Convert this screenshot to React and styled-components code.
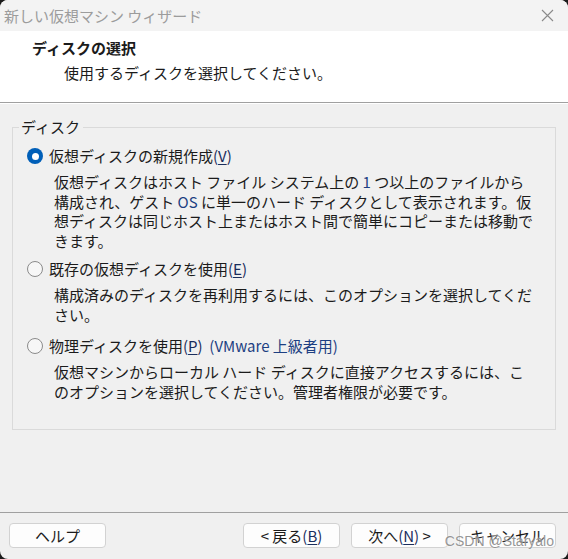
import React from 'react';
import styled, { createGlobalStyle } from 'styled-components';

const Global = createGlobalStyle`
  html, body { margin:0; padding:0; background:#1c1c1c; }
  body { font-family:"Noto Sans CJK JP", "Noto Sans", sans-serif; }
`

const Window = styled.div`
  position:relative;
  width:568px; height:559px;
  display:flex; flex-direction:column;
  background:#f0f0f0;
  border-radius:8px;
  overflow:hidden;
  color:#1b1b1b;
  font-size:15px;
`

const TitleBar = styled.div`
  height:31px; flex:none;
  display:flex; align-items:center; justify-content:space-between;
  padding:0 14px 0 4px;
  background:#f3f3f3;
  color:#9c9c9c;
  line-height:20px;
`

const Header = styled.div`
  height:72px; flex:none;
  background:#fff;
  border-bottom:1px solid #a0a0a0;
  box-shadow:0 1px 0 #fff;
  padding-top:7px;
  box-sizing:border-box;
`

const HeadTitle = styled.div`
  padding-left:32px;
  line-height:20px;
  font-weight:700;
`

const HeadSub = styled.div`
  padding-left:64px;
  margin-top:5px;
  line-height:20px;
`

const Body = styled.div`
  flex:1;
  padding:15px 12px 0 12px;
`

const Group = styled.fieldset`
  margin:0;
  height:312px;
  box-sizing:border-box;
  border:1px solid #dadada;
  padding:10px 0 0 0;
`

const Legend = styled.legend`
  margin-left:6px;
  padding:0 3px 0 2px;
  line-height:18px;
`

const Option = styled.div`
  padding-left:14px;
  margin-bottom:${p => p.gap}px;
`

const Row = styled.div`
  display:flex; align-items:center;
  height:20px;
  line-height:20px;
`

const Label = styled.span`
  white-space:pre;
`

const Radio = styled.span`
  width:16px; height:16px;
  box-sizing:border-box;
  border-radius:50%;
  margin-right:6px;
  flex:none;
  display:flex; align-items:center; justify-content:center;
  background:${p => p.checked ? '#005fb8' : '#f7f7f7'};
  border:${p => p.checked ? 'none' : '1px solid #8b8b8b'};
  &::after {
    content:'';
    display:${p => p.checked ? 'block' : 'none'};
    width:7px; height:7px; border-radius:50%;
    background:#fff;
  }
`

const Desc = styled.div`
  margin-top:6px;
  padding-left:27px;
  line-height:19.5px;
  white-space:nowrap;
`

const Latin = styled.span`
  color:#1d3f82;
`

const Key = styled.span`
  color:#1a2d5c;
  u { text-underline-offset:2px; }
`

const Footer = styled.div`
  height:47px; flex:none;
  box-sizing:border-box;
  border-top:1px solid #a0a0a0;
  padding:10px 12px 0 9px;
  display:flex; gap:11px;
`

const Button = styled.button`
  width:97px; height:25px;
  margin-left:${p => p.$push ? 'auto' : '0'};
  background:#fdfdfd;
  border:1px solid #d2d2d2;
  border-radius:4px;
  font-family:inherit;
  font-size:15px;
  line-height:20px;
  color:#1b1b1b;
  padding:0;
  white-space:pre;
`

const Watermark = styled.div`
  position:absolute;
  right:14px; bottom:10px;
  font-family:"Liberation Sans", Arial, sans-serif;
  font-size:14px;
  color:rgba(130,130,130,0.85);
  text-shadow:0 0 2px #fff;
  pointer-events:none;
`

const CloseIcon = () => (
  <svg width="13" height="13" viewBox="0 0 13 13">
    <path d="M1 1L12 12M12 1L1 12" stroke="#8a8a8a" strokeWidth="1.1" fill="none" />
  </svg>
)

const Access = ({ k }) => <Key>(<u>{k}</u>)</Key>

const options = [
  {
    checked:true,
    label:<>仮想ディスクの新規作成<Access k="V" /></>,
    lines:[
      <>仮想ディスクはホスト ファイル システム上の <Latin>1</Latin> つ以上のファイルから</>,
      <>構成され、ゲスト <Latin>OS</Latin> に単一のハード ディスクとして表示されます。仮</>,
      <>想ディスクは同じホスト上またはホスト間で簡単にコピーまたは移動で</>,
      <>きます。</>,
    ],
    gap:9,
  },
  {
    label:<>既存の仮想ディスクを使用<Access k="E" /></>,
    lines:[
      <>構成済みのディスクを再利用するには、このオプションを選択してくだ</>,
      <>さい。</>,
    ],
    gap:12,
  },
  {
    label:<>物理ディスクを使用<Access k="P" />{'  '}<Latin>(VMware 上級者用)</Latin></>,
    lines:[
      <>仮想マシンからローカル ハード ディスクに直接アクセスするには、こ</>,
      <>のオプションを選択してください。管理者権限が必要です。</>,
    ],
    gap:0,
  },
]

const App = () => (
  <>
    <Global />
    <Window>
      <TitleBar>
        <span>新しい仮想マシン ウィザード</span>
        <CloseIcon />
      </TitleBar>
      <Header>
        <HeadTitle>ディスクの選択</HeadTitle>
        <HeadSub>使用するディスクを選択してください。</HeadSub>
      </Header>
      <Body>
        <Group>
          <Legend>ディスク</Legend>
          {options.map((o, i) => (
            <Option key={i} gap={o.gap}>
              <Row><Radio checked={o.checked} /><Label>{o.label}</Label></Row>
              <Desc>{o.lines.map((l, j) => <div key={j}>{l}</div>)}</Desc>
            </Option>
          ))}
        </Group>
      </Body>
      <Footer>
        <Button>ヘルプ</Button>
        <Button $push>{'< 戻る'}<Access k="B" /></Button>
        <Button>次へ<Access k="N" />{' >'}</Button>
        <Button>キャンセル</Button>
      </Footer>
      <Watermark>CSDN @Staryalo</Watermark>
    </Window>
  </>
)

export default App;
